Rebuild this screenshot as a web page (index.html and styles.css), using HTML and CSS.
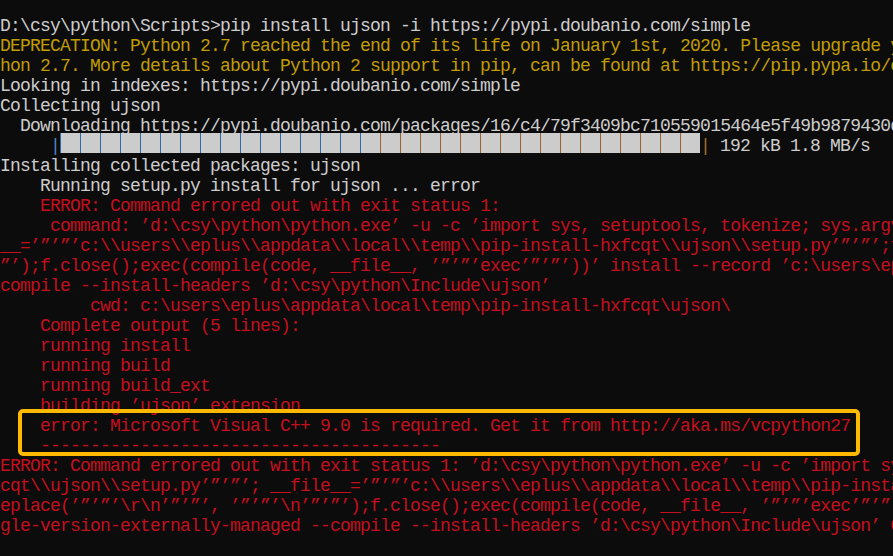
FILE: index.html
```html
<!DOCTYPE html>
<html>
<head>
<meta charset="utf-8">
<title>cmd</title>
<link rel="stylesheet" href="styles.css">
</head>
<body>
<div class="console">
<div class="ln">D:\csy\python\Scripts&gt;pip install ujson -i https://pypi.doubanio.com/simple</div>
<div class="ln warn">DEPRECATION: Python 2.7 reached the end of its life on January 1st, 2020. Please upgrade your Python as Python 2.7 is no longer maintained.</div>
<div class="ln warn">hon 2.7. More details about Python 2 support in pip, can be found at https://pip.pypa.io/en/latest/development/release-process/#python-2-support</div>
<div class="ln">Looking in indexes: https://pypi.doubanio.com/simple</div>
<div class="ln">Collecting ujson</div>
<div class="ln">  Downloading https://pypi.doubanio.com/packages/16/c4/79f3409bc710559015464e5f49b9879430d8f87498ecdc335899732e5377/ujson-1.35.tar.gz (192kB)</div>
<div class="ln barline"><span class="pre">     <span class="pipe-l">|</span></span><span class="bar"><span class="blk"></span><span class="blk"></span><span class="blk"></span><span class="blk"></span><span class="blk"></span><span class="blk"></span><span class="blk"></span><span class="blk"></span><span class="blk"></span><span class="blk"></span><span class="blk"></span><span class="blk"></span><span class="blk"></span><span class="blk"></span><span class="blk"></span><span class="blk"></span><span class="blk"></span><span class="blk"></span><span class="blk"></span><span class="blk"></span><span class="blk"></span><span class="blk"></span><span class="blk"></span><span class="blk"></span><span class="blk"></span><span class="blk"></span><span class="blk"></span><span class="blk"></span><span class="blk"></span><span class="blk"></span><span class="blk"></span><span class="blk"></span></span><span class="post"><span class="pipe-r">|</span> 192 kB 1.8 MB/s</span></div>
<div class="ln">Installing collected packages: ujson</div>
<div class="ln">    Running setup.py install for ujson ... error</div>
<div class="ln err">    ERROR: Command errored out with exit status 1:</div>
<div class="ln err">     command: ’d:\csy\python\python.exe’ -u -c ’import sys, setuptools, tokenize; sys.argv[0] = ’”’”’c:\\users\\eplus</div>
<div class="ln err">__=’”’”’c:\\users\\eplus\\appdata\\local\\temp\\pip-install-hxfcqt\\ujson\\setup.py’”’”’;f=getattr(tokenize, ’”’”’open’”’”’, open)(__file__)</div>
<div class="ln err">”’);f.close();exec(compile(code, __file__, ’”’”’exec’”’”’))’ install --record ’c:\users\eplus\appdata\local\temp\pip-record</div>
<div class="ln err">compile --install-headers ’d:\csy\python\Include\ujson’</div>
<div class="ln err">         cwd: c:\users\eplus\appdata\local\temp\pip-install-hxfcqt\ujson\</div>
<div class="ln err">    Complete output (5 lines):</div>
<div class="ln err">    running install</div>
<div class="ln err">    running build</div>
<div class="ln err">    running build_ext</div>
<div class="ln err">    building ’ujson’ extension</div>
<div class="ln err">    error: Microsoft Visual C++ 9.0 is required. Get it from http://aka.ms/vcpython27</div>
<div class="ln err">    ----------------------------------------</div>
<div class="ln err">ERROR: Command errored out with exit status 1: ’d:\csy\python\python.exe’ -u -c ’import sys, setuptools, tokenize; sys.argv</div>
<div class="ln err">cqt\\ujson\\setup.py’”’”’; __file__=’”’”’c:\\users\\eplus\\appdata\\local\\temp\\pip-install-hxfcqt\\ujson\\setup.py’”’”’</div>
<div class="ln err">eplace(’”’”’\r\n’”’”’, ’”’”’\n’”’”’);f.close();exec(compile(code, __file__, ’”’”’exec’”’”’))’ install --record</div>
<div class="ln err">gle-version-externally-managed --compile --install-headers ’d:\csy\python\Include\ujson’ Check the logs for full command output.</div>
</div>
<div class="highlight"></div>
</body>
</html>
```

FILE: styles.css
```css
html, body {
  margin: 0;
  padding: 0;
  background: #0c0c0c;
}

body {
  width: 893px;
  height: 556px;
  overflow: hidden;
  position: relative;
}

.console {
  padding-top: 16px;
  font-family: "Liberation Mono", "DejaVu Sans Mono", monospace;
  font-size: 18px;
  letter-spacing: -0.8px;
  line-height: 20px;
  color: #cccccc;
}

.ln {
  height: 20px;
  overflow: hidden;
  white-space: pre;
}

.warn {
  color: #c19c00;
}

.err {
  color: #c50f1f;
}

.barline {
  display: flex;
  align-items: flex-start;
  overflow: visible;
}

.pre {
  width: 60px;
  flex: none;
  white-space: pre;
}

.pipe-l {
  color: #4a86c2;
}

.pipe-r {
  color: #a86c2c;
}

.bar {
  display: flex;
  flex: none;
  width: 640px;
  height: 20px;
  margin-top: -3px;
}

.blk {
  flex: none;
  width: 19px;
  height: 20px;
  background: #cccccc;
  border-left: 1px solid #2d6aa6;
}

.blk:nth-child(n+17) {
  border-left-color: #9a6430;
}

.post {
  flex: none;
  white-space: pre;
}

.highlight {
  position: absolute;
  left: 18px;
  top: 409px;
  width: 842px;
  height: 47px;
  box-sizing: border-box;
  border: 4px solid #ffb900;
  border-radius: 5px;
}
```
